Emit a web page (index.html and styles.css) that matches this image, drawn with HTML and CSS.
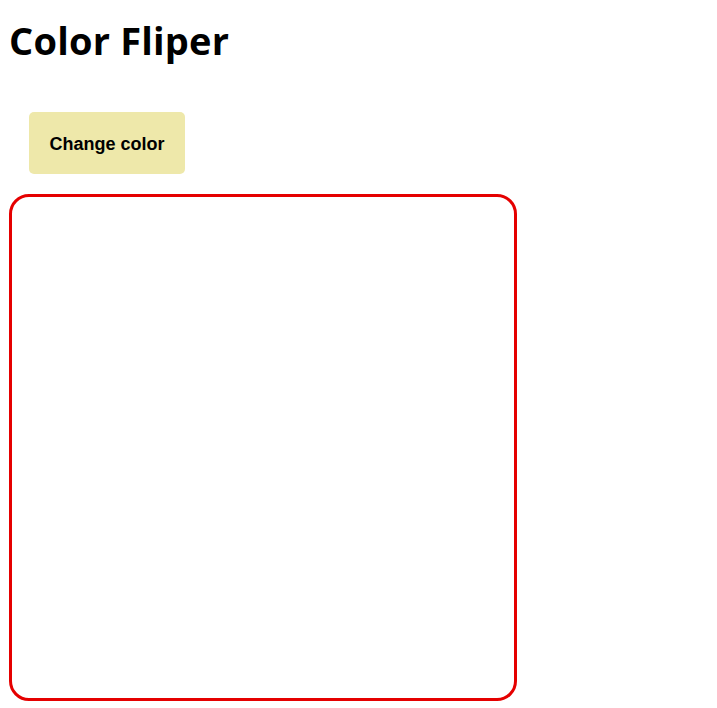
FILE: index.html
```html
<!DOCTYPE html>
<html>
<head>
<meta charset="utf-8">
<title>Color Fliper</title>
<link rel="stylesheet" href="styles.css">
</head>
<body>
<h1 class="title">Color Fliper</h1>
<div class="controls">
  <button class="btn">Change color</button>
</div>
<div class="box"></div>
</body>
</html>
```
FILE: styles.css
```css
body {
  margin: 8px;
  font-family: "Open Sans", "Noto Sans", sans-serif;
  background: #fff;
}
.title {
  font-size: 38px;
  font-weight: 700;
  margin: 10px 0 0 1px;
  line-height: 1.2;
  color: #000;
  letter-spacing: 0.2px;
}
.controls {
  padding: 48px 0 0 21px;
}
.btn {
  display: block;
  width: 156px;
  height: 62px;
  background: #eee8aa;
  border: none;
  border-radius: 5px;
  font-family: "Liberation Sans", Arial, sans-serif;
  font-weight: 700;
  font-size: 18px;
  padding-top: 5px;
  color: #000;
}
.box {
  margin: 20px 0 0 1px;
  width: 502px;
  height: 501px;
  border: 3px solid #e50000;
  border-radius: 20px;
}
```
